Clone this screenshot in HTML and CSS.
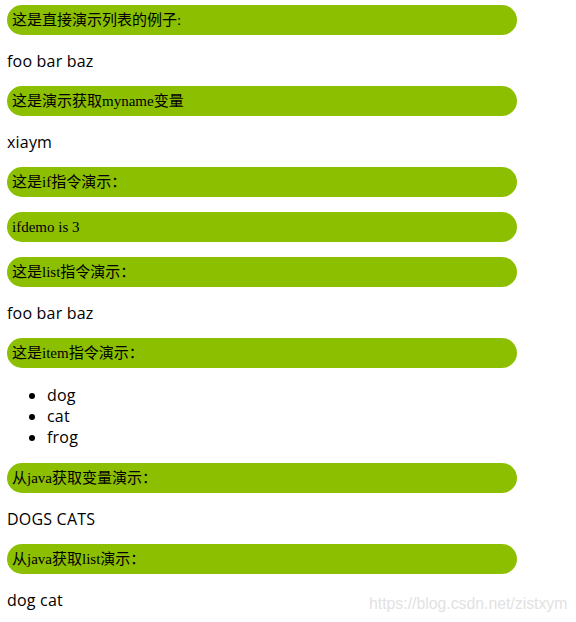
FILE: index.html
```html
<!DOCTYPE html>
<html>
<head>
<meta charset="utf-8">
<link rel="stylesheet" href="styles.css">
</head>
<body>
<div class="page">
  <div class="bar">这是直接演示列表的例子:</div>
  <p class="txt">foo bar baz</p>
  <div class="bar">这是演示获取myname变量</div>
  <p class="txt">xiaym</p>
  <div class="bar">这是if指令演示：</div>
  <div class="bar">ifdemo is 3</div>
  <div class="bar">这是list指令演示：</div>
  <p class="txt">foo bar baz</p>
  <div class="bar">这是item指令演示：</div>
  <ul class="list">
    <li>dog</li>
    <li>cat</li>
    <li>frog</li>
  </ul>
  <div class="bar">从java获取变量演示：</div>
  <p class="txt">DOGS CATS</p>
  <div class="bar">从java获取list演示：</div>
  <p class="txt">dog cat</p>
</div>
<div class="watermark">https://blog.csdn.net/zistxym</div>
</body>
</html>
```

FILE: styles.css
```css
html, body {
  margin: 0;
  padding: 0;
  background: #ffffff;
}
.page {
  display: flex;
  flex-direction: column;
  gap: 15px;
  padding: 5px 7px 0 7px;
  font-family: "Open Sans", "Noto Sans CJK SC", sans-serif;
  color: #000;
}
.bar {
  width: 505px;
  height: 30px;
  line-height: 30px;
  padding-left: 5px;
  border-radius: 15px;
  background: #8bbf00;
  font-family: "Liberation Serif", "Noto Sans CJK SC", serif;
  font-size: 15px;
  color: #000;
  white-space: nowrap;
}
.txt {
  margin: 0;
  font-size: 16px;
  line-height: 21px;
  height: 20px;
  padding-top: 1px;
  letter-spacing: 0.2px;
}
.list {
  margin: 2px 0 0 0;
  padding-left: 40px;
  font-size: 16px;
  line-height: 21px;
  letter-spacing: 0.2px;
}
.watermark {
  position: absolute;
  left: 369px;
  top: 593px;
  font-family: "Liberation Sans", sans-serif;
  font-size: 15.8px;
  line-height: 22px;
  color: #e2e2e2;
  white-space: nowrap;
}
```
